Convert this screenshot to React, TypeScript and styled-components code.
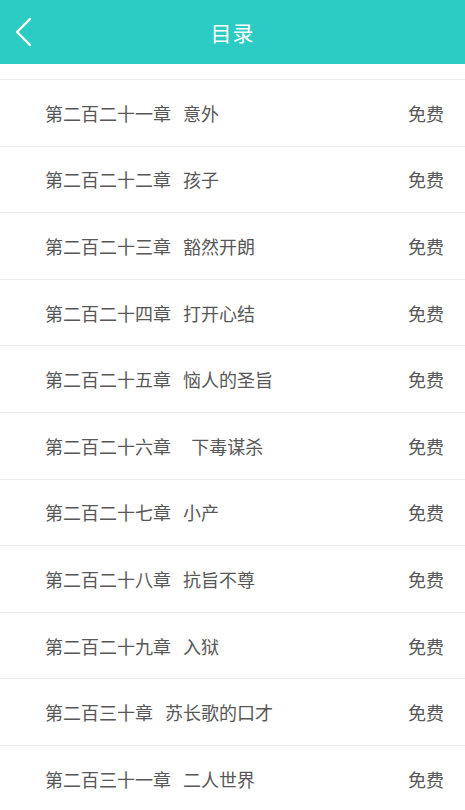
import React from 'react';
import styled, { createGlobalStyle } from 'styled-components';

const GlobalStyle = createGlobalStyle`
  html, body {
    margin: 0;
    padding: 0;
    background: #ffffff;
  }
  body {
    font-family: "Noto Sans CJK SC", "Noto Sans", sans-serif;
  }
`;

const Page = styled.div`
  width: 465px;
  height: 810px;
  overflow: hidden;
  background: #ffffff;
`;

const Header = styled.header`
  height: 64px;
  background: #2ccbc4;
  display: grid;
  grid-template-columns: 64px 1fr 64px;
  align-items: center;
`;

const BackButton = styled.button`
  border: 0;
  background: none;
  padding: 0 0 0 14px;
  height: 64px;
  display: flex;
  align-items: center;
  cursor: pointer;
`;

const Title = styled.h1`
  margin: 0;
  text-align: center;
  color: #ffffff;
  font-size: 21px;
  font-weight: 400;
  letter-spacing: 1px;
`;

const TopGap = styled.div`
  height: 15px;
  border-bottom: 1px solid #ececec;
`;

const List = styled.ul`
  list-style: none;
  margin: 0;
  padding: 0;
`;

const Row = styled.li`
  height: 65.6px;
  border-bottom: 1px solid #ececec;
  display: flex;
  align-items: center;
  justify-content: space-between;
  padding: 0 21px 0 45px;
  color: #575757;
  font-size: 18px;
`;

const ChapterName = styled.span`
  white-space: pre;
`;

const Price = styled.span`
  color: #575757;
`;

const chapters = [
  '第二百二十一章   意外',
  '第二百二十二章   孩子',
  '第二百二十三章   豁然开朗',
  '第二百二十四章   打开心结',
  '第二百二十五章   恼人的圣旨',
  '第二百二十六章     下毒谋杀',
  '第二百二十七章   小产',
  '第二百二十八章   抗旨不尊',
  '第二百二十九章   入狱',
  '第二百三十章   苏长歌的口才',
  '第二百三十一章   二人世界',
];

export default function App() {
  return (
    <Page>
      <GlobalStyle />
      <Header>
        <BackButton aria-label="返回">
          <svg width="20" height="30" viewBox="0 0 20 30" fill="none">
            <path d="M16 2 L3 15 L16 28" stroke="#ffffff" strokeWidth="2.4" strokeLinecap="round" strokeLinejoin="round" />
          </svg>
        </BackButton>
        <Title>目录</Title>
        <span />
      </Header>
      <TopGap />
      <List>
        {chapters.map((c) => (
          <Row key={c}>
            <ChapterName>{c}</ChapterName>
            <Price>免费</Price>
          </Row>
        ))}
      </List>
    </Page>
  );
}
